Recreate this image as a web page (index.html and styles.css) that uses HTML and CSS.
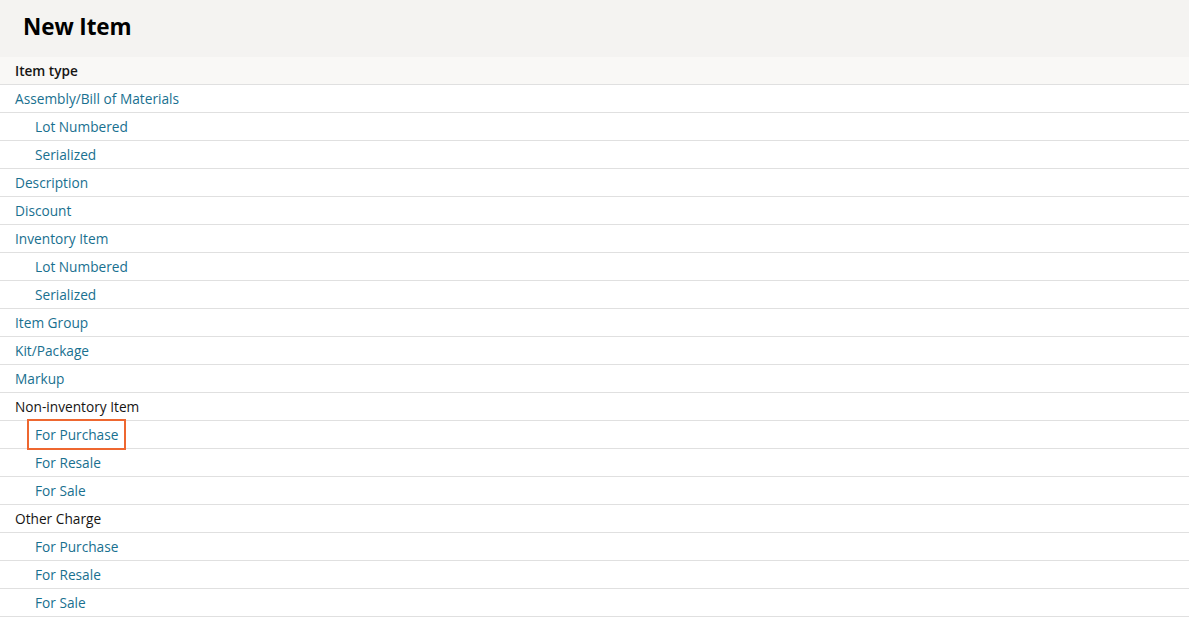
FILE: index.html
```html
<!DOCTYPE html>
<html>
<head>
<meta charset="utf-8">
<link rel="stylesheet" href="styles.css">
</head>
<body>
<div class="header"><h1 class="title">New Item</h1></div>
<div class="list">
  <div class="row head">Item type</div>
  <div class="row"><a class="link">Assembly/Bill of Materials</a></div>
  <div class="row sub"><a class="link">Lot Numbered</a></div>
  <div class="row sub"><a class="link">Serialized</a></div>
  <div class="row"><a class="link">Description</a></div>
  <div class="row"><a class="link">Discount</a></div>
  <div class="row"><a class="link">Inventory Item</a></div>
  <div class="row sub"><a class="link">Lot Numbered</a></div>
  <div class="row sub"><a class="link">Serialized</a></div>
  <div class="row"><a class="link">Item Group</a></div>
  <div class="row"><a class="link">Kit/Package</a></div>
  <div class="row"><a class="link">Markup</a></div>
  <div class="row plain">Non-inventory Item</div>
  <div class="row sub"><a class="link highlight">For Purchase</a></div>
  <div class="row sub"><a class="link">For Resale</a></div>
  <div class="row sub"><a class="link">For Sale</a></div>
  <div class="row plain">Other Charge</div>
  <div class="row sub"><a class="link">For Purchase</a></div>
  <div class="row sub"><a class="link">For Resale</a></div>
  <div class="row sub"><a class="link">For Sale</a></div>
</div>
</body>
</html>
```
FILE: styles.css
```css
html, body {
  margin: 0;
  padding: 0;
  background: #ffffff;
  font-family: "Open Sans", "Noto Sans", sans-serif;
  font-size: 13.7px;
  color: #161513;
}
.header {
  height: 57px;
  background: #f4f3f1;
  display: flex;
  align-items: center;
  padding-left: 23px;
  box-sizing: border-box;
}
.title {
  margin: 0;
  font-size: 22.5px;
  font-weight: 700;
  color: #000;
  line-height: 1;
  padding-bottom: 2px;
  letter-spacing: -0.1px;
}
.list {
  display: flex;
  flex-direction: column;
}
.row {
  height: 28px;
  box-sizing: border-box;
  border-bottom: 1px solid #e0e0e0;
  display: flex;
  align-items: center;
  padding-left: 15px;
}
.row.head {
  background: #f9f8f6;
  font-weight: 600;
  font-size: 13.6px;
}
.row.sub {
  padding-left: 35px;
}
.link {
  color: #19708f;
  text-decoration: none;
  cursor: pointer;
}
.highlight {
  outline: 2px solid #ee6730;
  outline-offset: 0;
  padding: 4px 6px 4px 6px;
  margin-left: -6px;
}
```
